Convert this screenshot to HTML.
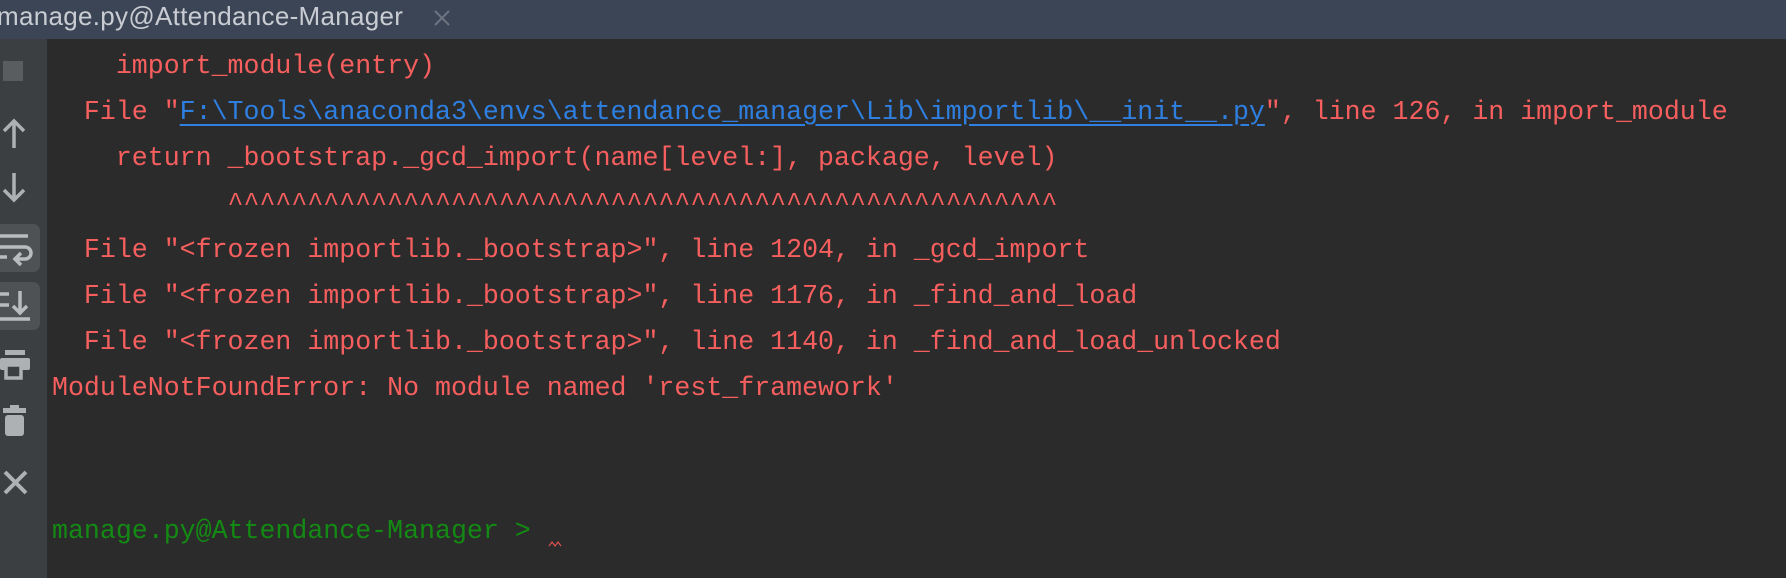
<!DOCTYPE html>
<html><head><style>
html,body{margin:0;padding:0;width:1786px;height:578px;overflow:hidden;background:#2b2b2b}
.title{position:absolute;left:0;top:0;width:1786px;height:39px;background:#3c4555;}
.title span{position:absolute;left:-3px;top:1px;font:26px "Liberation Sans",sans-serif;color:#c9cdd3;white-space:nowrap;letter-spacing:0.3px}
.side{position:absolute;left:0;top:39px;width:47px;height:539px;background:#3c3f41}
.btn{position:absolute;left:0;width:40px;height:48px;background:#4e5254;border-radius:0 7px 7px 0}
pre{position:absolute;left:52px;top:43px;margin:0;font:26.6px/46px "Liberation Mono",monospace;color:#f75f5f}
a{color:#2f7fe0;text-decoration:underline;text-underline-offset:5px}
.g{color:#138a13}
</style></head><body>
<div class="title"><span>manage.py@Attendance-Manager</span>
<svg style="position:absolute;left:433px;top:9px" width="18" height="18"><path d="M2 2L16 16M16 2L2 16" stroke="#6d7480" stroke-width="2"/></svg></div>
<div class="side">
<div style="position:absolute;left:3px;top:22px;width:20px;height:20px;background:#5a5d5f"></div>
<svg style="position:absolute;left:1px;top:78px" width="26" height="32"><path d="M13 31V4M3 14L13 4L23 14" stroke="#aeb1b4" stroke-width="3.5" fill="none"/></svg>
<svg style="position:absolute;left:1px;top:133px" width="26" height="32"><path d="M13 1V28M3 18L13 28L23 18" stroke="#aeb1b4" stroke-width="3.5" fill="none"/></svg>
<div class="btn" style="top:185px"></div>
<svg style="position:absolute;left:0;top:192px" width="34" height="36"><path d="M0 5H28M0 16H25a6 6 0 0 1 0 12H16M21 22L15 28L21 34M0 26H7" stroke="#b9bcbf" stroke-width="3.5" fill="none"/></svg>
<div class="btn" style="top:243px"></div>
<svg style="position:absolute;left:0;top:250px" width="34" height="36"><path d="M0 5H9M0 16H9M20 2V24M13 17L20 24L27 17M0 30H30" stroke="#b9bcbf" stroke-width="3.5" fill="none"/></svg>
<svg style="position:absolute;left:0;top:310px" width="30" height="32"><rect x="5" y="1" width="20" height="5" fill="#aeb1b4"/><rect x="0" y="9" width="30" height="12" rx="2" fill="#aeb1b4"/><rect x="6" y="16" width="15" height="13" fill="#3c3f41" stroke="#aeb1b4" stroke-width="3.5"/></svg>
<svg style="position:absolute;left:3px;top:366px" width="26" height="32"><rect x="0" y="3" width="23" height="5" fill="#aeb1b4"/><rect x="7" y="0" width="9" height="4" fill="#aeb1b4"/><rect x="2" y="10" width="19" height="21" rx="3" fill="#aeb1b4"/></svg>
<svg style="position:absolute;left:2px;top:430px" width="28" height="28"><path d="M3 3L24 24M24 3L3 24" stroke="#aeb1b4" stroke-width="4"/></svg>
</div>
<pre>    import_module(entry)
  File "<a>F:\Tools\anaconda3\envs\attendance_manager\Lib\importlib\__init__.py</a>", line 126, in import_module
    return _bootstrap._gcd_import(name[level:], package, level)
           ^^^^^^^^^^^^^^^^^^^^^^^^^^^^^^^^^^^^^^^^^^^^^^^^^^^^
  File "&lt;frozen importlib._bootstrap&gt;", line 1204, in _gcd_import
  File "&lt;frozen importlib._bootstrap&gt;", line 1176, in _find_and_load
  File "&lt;frozen importlib._bootstrap&gt;", line 1140, in _find_and_load_unlocked
ModuleNotFoundError: No module named 'rest_framework'

</pre>
<pre style="top:508px"><span class="g">manage.py@Attendance-Manager &gt;</span></pre>
<svg style="position:absolute;left:548px;top:540px" width="14" height="8"><path d="M1 6L4 2L7 6L10 2L13 6" stroke="#e05050" stroke-width="1.2" fill="none"/></svg>
</body></html>
